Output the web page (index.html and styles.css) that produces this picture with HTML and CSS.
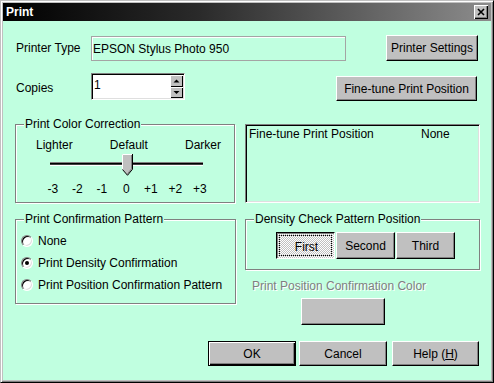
FILE: index.html
```html
<!DOCTYPE html>
<html lang="en">
<head>
    <meta charset="UTF-8">
    <title>Print</title>
    <link rel="stylesheet" href="styles.css">
</head>
<body>
    <div class="window">
        <div class="titlebar">
            <span class="title">Print</span>
            <span class="close-btn">
                <svg width="14" height="14" viewBox="0 0 14 14">
                    <path d="M4 4 L10 10 M10 4 L4 10" stroke="#000" stroke-width="1.6" fill="none"/>
                </svg>
            </span>
        </div>
        <div class="client">
            <div class="row row-printer">
                <span class="label">Printer Type</span>
                <div class="field">EPSON Stylus Photo 950</div>
                <button class="btn btn-settings">Printer Settings</button>
            </div>

            <div class="row row-copies">
                <span class="label label-copies">Copies</span>
                <div class="spin">
                    <span class="spin-value">1</span>
                    <span class="spin-arrows">
                        <span class="spin-btn spin-up">
                            <svg width="13" height="12" viewBox="0 0 13 12"><polygon points="3.5,7.5 9.5,7.5 6.5,4.5" fill="#000"/></svg>
                        </span>
                        <span class="spin-btn spin-down">
                            <svg width="13" height="11" viewBox="0 0 13 11"><polygon points="3.5,4 9.5,4 6.5,7" fill="#000"/></svg>
                        </span>
                    </span>
                </div>
                <button class="btn btn-finetune">Fine-tune Print Position</button>
            </div>

            <div class="row row-middle">
                <div class="group group-color">
                    <div class="group-title">Print Color Correction</div>
                    <div class="scale-labels">
                        <span>Lighter</span>
                        <span>Default</span>
                        <span>Darker</span>
                    </div>
                    <svg class="slider" width="153" height="23" viewBox="0 0 153 23">
                        <rect x="0" y="9" width="153" height="1" fill="#808080"/>
                        <rect x="0" y="10" width="153" height="1" fill="#000"/>
                        <rect x="0" y="11" width="153" height="1" fill="#404040"/>
                        <rect x="0" y="12" width="153" height="1" fill="#fff"/>
                        <polygon points="72,1 83,1 83,16 77.5,22 72,16" fill="#c0c0c0"/>
                        <polyline points="72.5,16.5 72.5,1.5 82,1.5" stroke="#fff" fill="none"/>
                        <polyline points="82.5,1 82.5,16.2 77.5,22.3 72.5,16.5" stroke="#000" fill="none"/>
                        <polyline points="81.5,2 81.5,15.8 77.5,20.8" stroke="#808080" fill="none"/>
                    </svg>
                    <div class="ticks">
                        <span>-3</span><span>-2</span><span>-1</span><span>0</span><span>+1</span><span>+2</span><span>+3</span>
                    </div>
                </div>
                <div class="listbox">
                    <div class="list-row">
                        <span class="list-name">Fine-tune Print Position</span>
                        <span>None</span>
                    </div>
                </div>
            </div>

            <div class="row row-lower">
                <div class="group group-confirm">
                    <div class="group-title">Print Confirmation Pattern</div>
                    <div class="radio"><span class="radio-dot"></span>None</div>
                    <div class="radio"><span class="radio-dot checked"></span>Print Density Confirmation</div>
                    <div class="radio"><span class="radio-dot"></span>Print Position Confirmation Pattern</div>
                </div>
                <div class="right-col">
                    <div class="group group-density">
                        <div class="group-title">Density Check Pattern Position</div>
                        <div class="seg">
                            <button class="btn seg-btn pressed">First</button>
                            <button class="btn seg-btn">Second</button>
                            <button class="btn seg-btn">Third</button>
                        </div>
                    </div>
                    <div class="disabled-label">Print Position Confirmation Color</div>
                    <button class="btn btn-color"></button>
                </div>
            </div>

            <div class="row row-actions">
                <button class="btn btn-action btn-default">OK</button>
                <button class="btn btn-action btn-cancel">Cancel</button>
                <button class="btn btn-action btn-help">Help (<u>H</u>)</button>
            </div>
        </div>
    </div>
</body>
</html>
```

FILE: styles.css
```css
body {
    margin: 0;
    font-family: 'Liberation Sans', Arial, sans-serif;
    font-size: 12px;
    line-height: 14px;
    color: #000;
    background: #c0c0c0;
}
.window {
    width: 494px;
    height: 383px;
    box-sizing: border-box;
    border: 1px solid;
    border-color: #c0c0c0 #000 #000 #c0c0c0;
    box-shadow: inset 1px 1px #fff, inset -1px -1px #808080;
    padding: 2px;
    display: flex;
    flex-direction: column;
    background: #c0c0c0;
}
.titlebar {
    height: 18px;
    flex: none;
    display: flex;
    align-items: center;
    padding: 0 3px 0 3px;
    background: linear-gradient(to right, #000 0%, #2a2a2a 40%, #8c8c8c 100%);
}
.title {
    color: #fff;
    font-weight: bold;
}
.close-btn {
    margin-left: auto;
    width: 14px;
    height: 14px;
    display: flex;
    background: #c0c0c0;
    box-shadow: inset 1px 1px #fff, inset -1px -1px #000, inset -2px -2px #808080;
}
.client {
    flex: 1;
    background: #c0ffe0; /* mint dialog face */
    padding: 14px 11px 0 12px;
}
.row {
    display: flex;
}
.label {
    width: 76px;
    box-sizing: border-box;
    padding-left: 1px;
    white-space: nowrap;
}

/* generic win-style button */
.btn {
    font: inherit;
    color: #000;
    margin: 0;
    padding: 0;
    box-sizing: border-box;
    background: #c0c0c0;
    border: 1px solid;
    border-color: #fff #000 #000 #fff;
    box-shadow: inset -1px -1px #808080;
    white-space: nowrap;
}

.row-printer {
    align-items: center;
}
.field {
    width: 255px;
    height: 25px;
    box-sizing: border-box;
    border: 1px solid #a4a4a4;
    box-shadow: inset 1px 1px #fff;
    padding: 5px 1px 0;
    white-space: nowrap;
}
.btn-settings {
    margin-left: auto;
    margin-right: 2px;
    width: 92px;
    height: 26px;
}

.row-copies {
    margin-top: 12px;
    align-items: flex-start;
}
.label-copies {
    margin-top: 8px;
}
.spin {
    width: 94px;
    height: 27px;
    box-sizing: border-box;
    display: flex;
    background: #fff;
    border: 1px solid;
    border-color: #808080 #fff #fff #808080;
    box-shadow: inset 1px 1px #000, inset -1px -1px #dfdfdf;
    padding: 1px;
}
.spin-value {
    flex: 1;
    padding: 3px 0 0 1px;
}
.spin-arrows {
    display: flex;
    flex-direction: column;
    width: 13px;
}
.spin-btn {
    display: flex;
    background: #c0c0c0;
    box-shadow: inset 1px 1px #fff, inset -1px -1px #000;
}
.spin-up {
    height: 12px;
}
.spin-down {
    height: 11px;
}
.btn-finetune {
    margin-left: auto;
    margin-right: 3px;
    margin-top: 3px;
    width: 141px;
    height: 25px;
}

/* group boxes */
.group {
    box-sizing: border-box;
    border: 1px solid #808080;
    box-shadow: 1px 1px 0 #fff, inset 1px 1px 0 #fff;
}
.group-title {
    width: max-content;
    margin: -8px 0 0 8px;
    padding: 0 1px;
    background: #c0ffe0;
}

.row-middle {
    margin-top: 23px;
    gap: 10px;
}
.group-color {
    width: 220px;
    height: 79px;
}
.scale-labels {
    display: flex;
    justify-content: space-between;
    margin-top: 7px;
    padding: 0 13px 0 20px;
}
.slider {
    display: block;
    margin: 1px 0 0 34px;
}
.ticks {
    display: grid;
    grid-template-columns: repeat(7, 24.5px);
    margin: 6px 0 0 24.5px;
    text-align: center;
}
.listbox {
    width: 235px;
    height: 79px;
    box-sizing: border-box;
    border: 1px solid;
    border-color: #808080 #fff #fff #808080;
    box-shadow: inset 1px 1px #000, inset -1px -1px #dfdfdf;
    padding: 2px 3px 0;
}
.list-row {
    display: flex;
    white-space: nowrap;
}
.list-name {
    width: 172px;
}

.row-lower {
    margin-top: 16px;
    gap: 9px;
}
.group-confirm {
    width: 221px;
    height: 85px;
}
.radio {
    display: flex;
    align-items: center;
    height: 14px;
    margin-top: 8px;
    padding-left: 5px;
    white-space: nowrap;
}
.radio-dot {
    width: 12px;
    height: 12px;
    box-sizing: border-box;
    margin-right: 5px;
    border-radius: 50%;
    border: 1px solid;
    border-color: #808080 #fff #fff #808080;
    background: #fff;
    box-shadow: inset 1px 1px 0 #000, inset -1px -1px 0 #dfdfdf;
    display: flex;
    align-items: center;
    justify-content: center;
}
.radio-dot.checked::after {
    content: "";
    width: 4px;
    height: 4px;
    border-radius: 50%;
    background: #000;
}
.right-col {
    width: 235px;
}
.group-density {
    height: 51px;
}
.seg {
    display: flex;
    gap: 1px;
    margin: 6px 0 0 30px;
}
.seg-btn {
    width: 59px;
    height: 27px;
}
.seg-btn.pressed {
    border-color: #000 #fff #fff #000;
    box-shadow: inset 1px 1px #808080;
    background: repeating-conic-gradient(#c0c0c0 0 25%, #fff 0 50%) 0 0 / 2px 2px;
    padding: 2px 0 0 2px;
    outline: 1px dotted #000;
    outline-offset: -4px;
}
.disabled-label {
    margin: 9px 0 0 7px;
    color: #808080;
    text-shadow: 1px 1px 0 #fff;
    white-space: nowrap;
}
.btn-color {
    display: block;
    margin: 5px 0 0 56px;
    width: 84px;
    height: 27px;
}

.row-actions {
    margin-top: 16px;
    justify-content: flex-end;
    padding-right: 1px;
}
.btn-action {
    height: 25px;
}
.btn-default {
    width: 88px;
    border-color: #000;
    box-shadow: inset 1px 1px #fff, inset -1px -1px #000, inset -2px -2px #808080;
}
.btn-cancel {
    width: 88px;
    margin-left: 3px;
}
.btn-help {
    width: 87px;
    margin-left: 5px;
}
```
